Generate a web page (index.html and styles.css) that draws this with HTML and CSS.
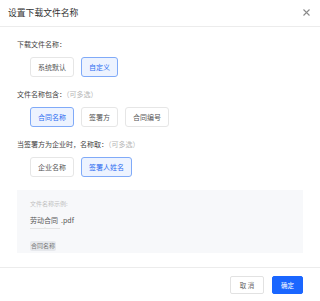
FILE: index.html
```html
<!DOCTYPE html>
<html lang="zh">
<head>
<meta charset="utf-8">
<link rel="stylesheet" href="styles.css">
</head>
<body>
<div class="dialog">
  <div class="header">
    <span class="title">设置下载文件名称</span>
    <span class="close" aria-label="关闭">
      <svg width="7" height="7" viewBox="0 0 7 7"><path d="M0.5 0.5L6.5 6.5M6.5 0.5L0.5 6.5" stroke="#8a8a8a" stroke-width="1.1" fill="none"/></svg>
    </span>
  </div>
  <div class="content">
    <div class="label">下载文件名称：</div>
    <div class="options">
      <span class="opt">系统默认</span>
      <span class="opt active">自定义</span>
    </div>
    <div class="label">文件名称包含：<span class="hint">（可多选）</span></div>
    <div class="options">
      <span class="opt active">合同名称</span>
      <span class="opt">签署方</span>
      <span class="opt">合同编号</span>
    </div>
    <div class="label">当签署方为企业时，名称取：<span class="hint">（可多选）</span></div>
    <div class="options">
      <span class="opt">企业名称</span>
      <span class="opt active">签署人姓名</span>
    </div>
    <div class="example">
      <div class="ex-title">文件名称示例:</div>
      <div class="ex-name"><span class="ex-part">劳动合同</span><span class="ex-ext">.pdf</span></div>
      <div class="ex-tag">合同名称</div>
    </div>
  </div>
  <div class="footer">
    <span class="btn">取 消</span>
    <span class="btn primary">确定</span>
  </div>
</div>
</body>
</html>
```
FILE: styles.css
```css
html, body {
  margin: 0;
  padding: 0;
  background: #fff;
}
body {
  font-family: "Noto Sans CJK SC", "Noto Sans", sans-serif;
  color: #333;
}
.dialog {
  width: 320px;
  height: 301px;
  display: flex;
  flex-direction: column;
}
.header {
  height: 26px;
  border-bottom: 1px solid #ececec;
  display: flex;
  align-items: center;
  justify-content: space-between;
  padding: 0 10px 0 8px;
}
.title {
  font-size: 8.8px;
  color: #333;
  line-height: 1;
}
.close {
  display: flex;
  width: 7px;
  height: 7px;
  margin-top: -1px;
}
.content {
  padding: 12px 17px 0;
  flex: 1;
}
.label {
  font-size: 7px;
  line-height: 11px;
  color: #444;
  margin-bottom: 7px;
}
.hint {
  color: #b5b5b5;
}
.options {
  display: flex;
  gap: 7px;
  padding-left: 13px;
  margin-bottom: 12px;
}
.opt {
  height: 18px;
  padding: 0 7px;
  border: 1px solid #e6e6e6;
  border-radius: 3px;
  font-size: 7px;
  line-height: 18px;
  color: #555;
  background: #fff;
}
.opt.active {
  border-color: #80aaf8;
  background: #edf3ff;
  color: #2c6cf0;
}
.example {
  background: #f7f8fa;
  height: 63px;
  margin-top: 13px;
  padding: 9px 13px 0;
  box-sizing: border-box;
}
.ex-title {
  font-size: 6px;
  line-height: 9px;
  color: #c0c0c0;
}
.ex-name {
  margin-top: 7px;
  font-size: 7px;
  line-height: 10px;
  color: #555;
  display: flex;
  align-items: flex-start;
}
.ex-part {
  display: inline-block;
  position: relative;
  border-bottom: 1px solid #e4e4e4;
  padding-bottom: 3px;
  padding-right: 2px;
}
.ex-part::after {
  content: "";
  position: absolute;
  left: 13px;
  bottom: -1px;
  width: 0;
  height: 0;
  border-left: 2px solid transparent;
  border-right: 2px solid transparent;
  border-bottom: 2px solid #e4e4e4;
}
.ex-ext {
  margin-left: 1px;
}
.ex-tag {
  display: inline-block;
  margin-top: 3px;
  padding: 0 1px;
  font-size: 6px;
  line-height: 10px;
  color: #777;
  background: #e6e8ec;
  border-radius: 2px;
}
.footer {
  height: 34px;
  border-top: 1px solid #ececec;
  display: flex;
  justify-content: flex-end;
  align-items: flex-start;
  gap: 8px;
  padding: 8px 17px 0;
  box-sizing: border-box;
}
.btn {
  width: 34px;
  height: 18px;
  box-sizing: border-box;
  border: 1px solid #e2e2e2;
  border-radius: 2px;
  font-size: 6.5px;
  line-height: 16px;
  text-align: center;
  color: #666;
}
.btn.primary {
  width: 31px;
  background: #1a66ff;
  border-color: #1a66ff;
  color: #fff;
}
```
